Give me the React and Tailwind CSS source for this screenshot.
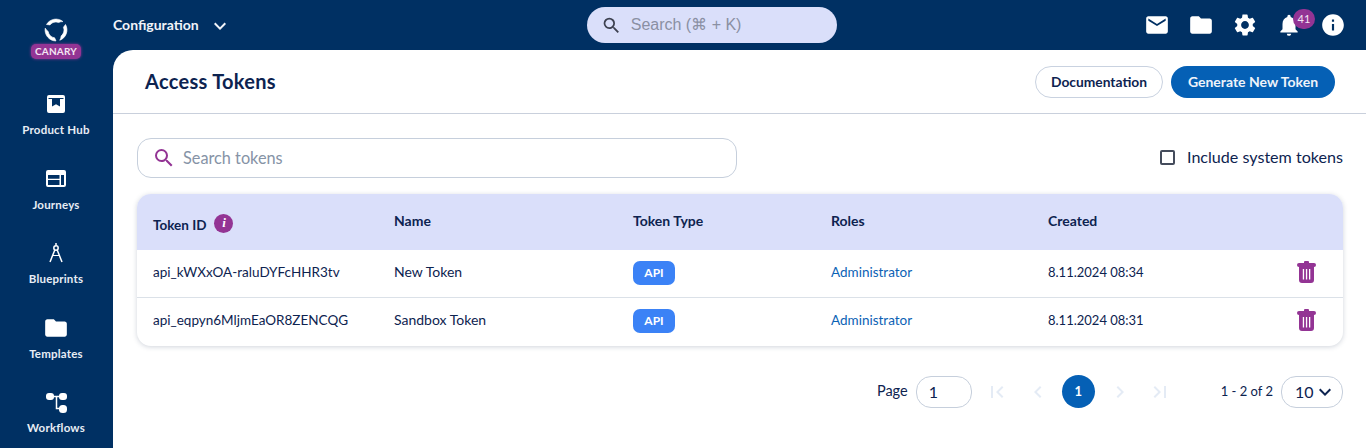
import React from "react";
import { MdEmail, MdFolder, MdSettings, MdNotifications, MdInfo, MdSearch, MdKeyboardArrowDown, MdFirstPage, MdLastPage, MdChevronLeft, MdChevronRight } from "react-icons/md";

function CanaryLogo() {
  const arc = "M2.500 6.500 A 11 11 0 0 1 19 3.600 A 8 8 0 0 0 14.700 4.500 A 8 8 0 0 0 5.900 6.900 Z";
  return (
    <svg width="24" height="24" viewBox="0 0 24 24" fill="white" stroke="white" strokeWidth="0.600" strokeLinejoin="round">
      <path d={arc} />
      <path d={arc} transform="rotate(120 12 12)" />
      <path d={arc} transform="rotate(240 12 12)" />
    </svg>
  );
}

function HubIcon() {
  return (
    <svg width="18" height="18" viewBox="0 0 18 18">
      <path fillRule="evenodd" fill="white" d="M2 0h14a2 2 0 0 1 2 2v14a2 2 0 0 1-2 2H2a2 2 0 0 1-2-2V2a2 2 0 0 1 2-2zM1.500 3v1H5v7.500l4-2.300 4 2.300V4h3.500V3z" />
    </svg>
  );
}

function JourneysIcon() {
  return (
    <svg width="20" height="17" viewBox="0 0 20 17">
      <path fillRule="evenodd" fill="white" d="M2 0h16a2 2 0 0 1 2 2v13a2 2 0 0 1-2 2H2a2 2 0 0 1-2-2V2a2 2 0 0 1 2-2zM2 5v3.800h11.500V5zM2 10v5h11.500v-5zM15 5v10h3V5z" />
    </svg>
  );
}

function BlueprintsIcon() {
  return (
    <svg width="14" height="20" viewBox="0 0 14 20" fill="none" stroke="white" strokeWidth="1.500">
      <path d="M7 0v2.500" />
      <circle cx="7" cy="5" r="2.200" />
      <path d="M5.800 7 L1 19" />
      <path d="M8.200 7 L13 19" />
      <path d="M3.500 12.500 L10.500 12.500" strokeWidth="1" />
    </svg>
  );
}

function WorkflowsIcon() {
  return (
    <svg width="21" height="21" viewBox="0 0 21 21" fill="white">
      <rect x="0" y="1" width="8" height="7" rx="3" />
      <rect x="13" y="1" width="8" height="7" rx="3" />
      <rect x="13" y="13" width="8" height="8" rx="3.500" />
      <path d="M7 4.500h7M10.500 4.500v12h4" fill="none" stroke="white" strokeWidth="1.500" />
    </svg>
  );
}

function TrashIcon() {
  return (
    <svg className="mb-[3px]" width="19" height="22" viewBox="0 0 19 22" fill="#933494">
      <rect x="7" y="0" width="5" height="3" rx="1" />
      <rect x="0" y="2" width="19" height="4" rx="2" />
      <path fillRule="evenodd" d="M2 5h15v14a3 3 0 0 1-3 3H5a3 3 0 0 1-3-3zM5.800 8v10.500h1.300V8zM8.900 8v10.500h1.300V8zM12 8v10.500h1.300V8z" />
    </svg>
  );
}

function NavItem({ icon, label }) {
  return (
    <div className="flex h-[74.500px] shrink-0 flex-col items-center pt-[5px]">
      <div className="flex h-[24px] items-center justify-center">{icon}</div>
      <div className="mt-[7px] text-[11.500px] font-bold leading-[14px] tracking-[0.2px] text-[#e8edf5]">{label}</div>
    </div>
  );
}

function TokenRow({ id, name, created, last }) {
  return (
    <div className={`grid h-[48px] grid-cols-[241px_239px_198px_217px_1fr] items-center border-b pb-[1px] pl-[16px] text-[13.500px] text-[#0d2350] ${last ? "border-transparent" : "border-[#dbe1e8]"}`}>
      <div className="mb-[1px] truncate">{id}</div>
      <div className="mb-[3px] text-[14px]">{name}</div>
      <div>
        <span className="inline-flex h-[24px] w-[42px] items-center justify-center rounded-[7px] bg-[#3b82f6] text-[12px] font-bold text-white">API</span>
      </div>
      <div className="mb-[1px] text-[#0b62b5]">Administrator</div>
      <div className="flex items-center justify-between pr-[27px]">
        <span className="text-[13px]">{created}</span>
        <TrashIcon />
      </div>
    </div>
  );
}

export default function App() {
  return (
    <div className="flex h-[448px] w-[1366px] overflow-hidden bg-[#003063] font-['Lato','Open_Sans',sans-serif]">
      <aside className="flex w-[113px] shrink-0 flex-col items-stretch pr-[1px]">
        <div className="flex h-[87px] shrink-0 flex-col items-center pt-[18px]">
          <CanaryLogo />
          <span className="mt-[2px] rounded-[5px] bg-[#933494] px-[4px] text-[10px] font-bold leading-[15px] tracking-[0.2px] text-[#f3e6f3] shadow-[0_0_3px_#933494]">CANARY</span>
        </div>
        <NavItem icon={<HubIcon />} label="Product Hub" />
        <NavItem icon={<JourneysIcon />} label="Journeys" />
        <NavItem icon={<BlueprintsIcon />} label="Blueprints" />
        <NavItem icon={<MdFolder size={26} color="white" />} label="Templates" />
        <NavItem icon={<WorkflowsIcon />} label="Workflows" />
      </aside>
      <div className="flex min-w-0 flex-1 flex-col">
        <header className="relative flex h-[50px] shrink-0 items-center">
          <div className="flex items-center pb-[1px] text-[14px] font-bold text-[#f1f4f9]">
            Configuration
            <MdKeyboardArrowDown className="ml-[9px] mt-[3px]" size={24} />
          </div>
          <div className="ml-[355px] flex h-[36px] w-[250px] items-center rounded-[18px] bg-[#dadffa] pl-[14px] font-['Liberation_Sans',sans-serif] text-[16px] text-[#8a90a3]">
            <MdSearch className="mr-[9px] text-[#3d4150]" size={21} />
            Search (⌘ + K)
          </div>
          <div className="ml-auto mr-[20px] flex items-center text-white">
            <MdEmail size={26} />
            <MdFolder className="ml-[18px]" size={26} />
            <MdSettings className="ml-[18px]" size={26} />
            <div className="relative ml-[18px]">
              <MdNotifications size={26} />
              <span className="absolute left-[17px] top-[-3px] flex h-[20px] w-[22px] items-center justify-center rounded-full bg-[#933494] text-[11px] text-[#f3e6f3]">41</span>
            </div>
            <MdInfo className="ml-[18px]" size={26} />
          </div>
        </header>
        <main className="min-h-0 flex-1 rounded-tl-[20px] bg-white">
          <div className="flex h-[64px] items-center justify-between border-b border-[#c9d0dc] pl-[32px] pr-[31px]">
            <h1 className="pb-[2px] text-[20px] font-bold tracking-[0.3px] text-[#0d2350]">Access Tokens</h1>
            <div className="flex gap-[8px]">
              <button className="h-[32px] w-[128px] rounded-full border border-[#c9d2e0] pt-[1px] text-[13.800px] font-bold text-[#0d2350]">Documentation</button>
              <button className="h-[32px] w-[164px] rounded-full bg-[#0560b5] text-[14px] font-bold text-[#eef3fa]">Generate New Token</button>
            </div>
          </div>
          <div className="pl-[24px] pr-[23px] pt-[24px]">
            <div className="flex items-center justify-between">
              <div className="flex h-[40px] w-[600px] items-center rounded-[14px] border border-[#c6cfdc] pl-[14px] text-[16.300px] text-[#8693a6]">
                <MdSearch className="mr-[7px] text-[#933494]" size={24} />
                Search tokens
              </div>
              <label className="mb-[1px] flex items-center text-[16.100px] text-[#0d2350]">
                <span className="mr-[12px] h-[15px] w-[15px] rounded-[2px] border-2 border-[#444c5c]" />
                Include system tokens
              </label>
            </div>
            <div className="mt-[16px] overflow-hidden rounded-[14px] bg-white shadow-[0_1px_5px_rgba(40,60,90,0.22)]">
              <div className="grid h-[56px] grid-cols-[241px_239px_198px_217px_1fr] items-center bg-[#dadffa] pl-[16px] text-[14px] font-bold text-[#0d2350]">
                <div className="flex items-center pt-[6px] text-[13.500px]">
                  Token ID
                  <span className="mb-[4px] ml-[8px] flex h-[19px] w-[19px] items-center justify-center rounded-full bg-[#933494] font-['Liberation_Serif',serif] text-[13px] italic text-white">i</span>
                </div>
                <div className="pb-[4px]">Name</div>
                <div className="pb-[4px]">Token Type</div>
                <div className="pb-[4px]">Roles</div>
                <div className="pb-[4px]">Created</div>
              </div>
              <TokenRow id="api_kWXxOA-raluDYFcHHR3tv" name="New Token" created="8.11.2024 08:34" />
              <TokenRow id="api_eqpyn6MljmEaOR8ZENCQG" name="Sandbox Token" created="8.11.2024 08:31" last />
            </div>
            <div className="mt-[29px] flex items-center justify-end text-[#0d2350]">
              <span className="mb-[2px] mr-[8px] text-[14.500px]">Page</span>
              <div className="flex h-[32px] w-[56px] items-center rounded-[15px] border border-[#c6cfdc] pl-[12px] text-[16px]">1</div>
              <MdFirstPage className="ml-[13px] text-[#e4ebf5]" size={24} />
              <MdChevronLeft className="ml-[17px] text-[#e4ebf5]" size={24} />
              <span className="ml-[12px] flex h-[33px] w-[33px] items-center justify-center rounded-full bg-[#0560b5] text-[13px] font-bold text-white">1</span>
              <MdChevronRight className="ml-[13px] text-[#e4ebf5]" size={24} />
              <MdLastPage className="ml-[16px] text-[#e4ebf5]" size={24} />
              <span className="ml-[49px] text-[13px]">1 - 2 of 2</span>
              <div className="ml-[8px] flex h-[32px] w-[62px] items-center rounded-[15px] border border-[#c6cfdc] pl-[13px] text-[16px]">
                10
                <MdKeyboardArrowDown className="ml-[-1px]" size={24} />
              </div>
            </div>
          </div>
        </main>
      </div>
    </div>
  );
}
